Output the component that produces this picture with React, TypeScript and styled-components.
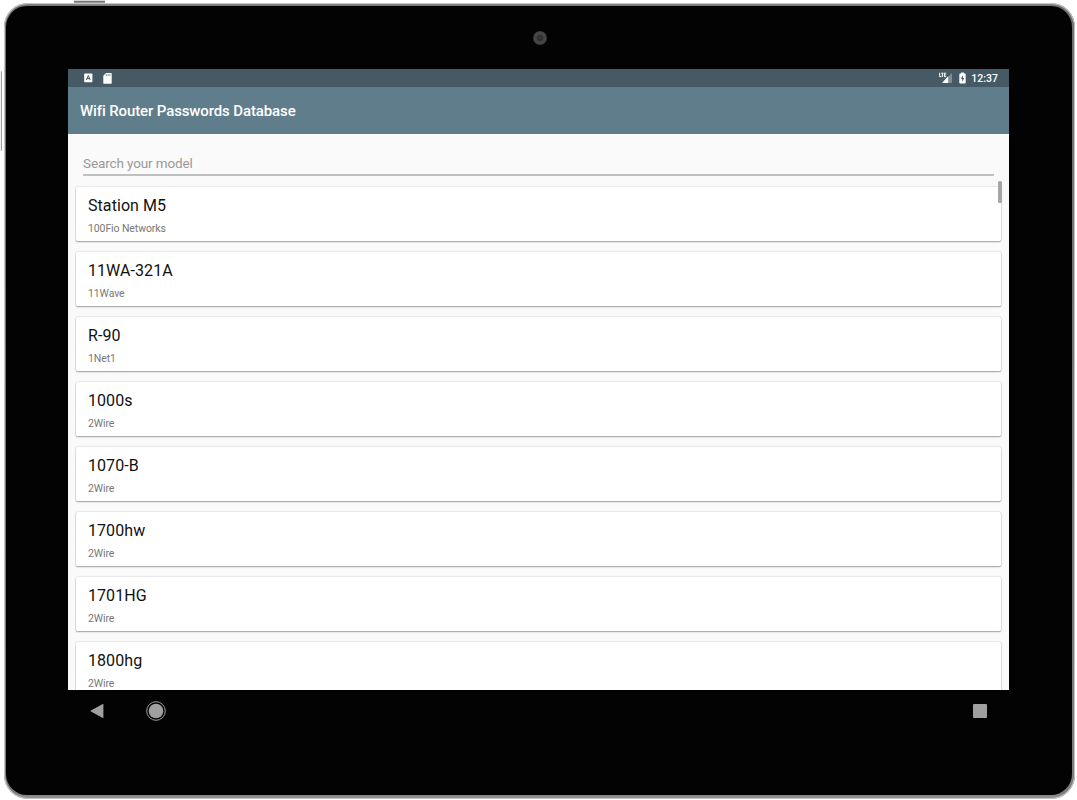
import React from "react";
import styled, { createGlobalStyle } from "styled-components";

const routers = [
  { model: "Station M5", brand: "100Fio Networks" },
  { model: "11WA-321A", brand: "11Wave" },
  { model: "R-90", brand: "1Net1" },
  { model: "1000s", brand: "2Wire" },
  { model: "1070-B", brand: "2Wire" },
  { model: "1700hw", brand: "2Wire" },
  { model: "1701HG", brand: "2Wire" },
  { model: "1800hg", brand: "2Wire" },
];

const App = () => {
  return (
    <Page>
      <GlobalStyle />
      <PowerButton />
      <VolumeButton />
      <Device>
        <Bezel>
          <TopBezel>
            <Camera />
          </TopBezel>
          <Screen>
            <StatusBar>
              <StatusGroup>
                <KeyboardIcon />
                <SdCardIcon />
              </StatusGroup>
              <StatusGroup>
                <SignalIcon />
                <BatteryIcon />
                <Clock>12:37</Clock>
              </StatusGroup>
            </StatusBar>
            <AppBar>
              <Title>Wifi Router Passwords Database</Title>
            </AppBar>
            <Search placeholder="Search your model" />
            <List>
              <ScrollThumb />
              {routers.map((router) => (
                <Card key={router.model}>
                  <Model>{router.model}</Model>
                  <Brand>{router.brand}</Brand>
                </Card>
              ))}
            </List>
          </Screen>
          <NavBar>
            <NavGroup>
              <svg width="14" height="16" viewBox="0 0 14 16">
                <path d="M13.4 1.2v13.6q0 .6-.6.3L.9 8.4q-.6-.4 0-.8L12.8.9q.6-.3.6.3z" fill="#a0a0a0" />
              </svg>
              <svg width="20" height="20" viewBox="0 0 20 20">
                <circle cx="10" cy="10" r="9.3" fill="none" stroke="#a0a0a0" strokeWidth="1" />
                <circle cx="10" cy="10" r="7.3" fill="#a0a0a0" />
              </svg>
            </NavGroup>
            <Recents />
          </NavBar>
        </Bezel>
      </Device>
    </Page>
  );
};

export default App;

const KeyboardIcon = () => (
  <svg width="9" height="10" viewBox="0 0 9 10">
    <rect x="0.2" y="0.5" width="8.2" height="8.8" rx="0.8" fill="#fff" />
    <path d="M2.4 7 4.3 2.5 6.2 7M3 5.6h2.6" fill="none" stroke="#455a64" strokeWidth="1" />
  </svg>
);

const SdCardIcon = () => (
  <svg width="9" height="11" viewBox="0 0 9 11">
    <path d="M3 0h4.8q.9 0 .9.9v9q0 .9-.9.9H1.2q-.9 0-.9-.9V2.8z" fill="#fff" />
    <path d="M3.3 1.2v1.9M5.1 1.2v1.9M6.9 1.2v1.9" stroke="#6b7d86" strokeWidth="0.9" />
  </svg>
);

const SignalIcon = () => (
  <svg width="14" height="12" viewBox="0 0 14 12">
    <path d="M13 1v10H3z" fill="#7f8e95" />
    <path d="M9.2 4.3V11H3z" fill="#fff" />
    <path d="M.7.8v3.9h1.6M2.3 1.2h2.2M3.4 1.2v3.8M7.2 1.2H5.4v3.5h1.8M5.4 2.9h1.5" fill="none" stroke="#fff" strokeWidth="1" />
  </svg>
);

const BatteryIcon = () => (
  <svg width="7" height="12" viewBox="0 0 7 12">
    <path d="M2.2.4h2.6v1h1q.9 0 .9.9v8.2q0 .9-.9.9H1.2q-.9 0-.9-.9V2.3q0-.9.9-.9h1z" fill="#fff" />
    <path d="M4 3.3 1.8 6.8h1.4v2.9L5.3 6H4z" fill="#455a64" />
  </svg>
);

const GlobalStyle = createGlobalStyle`
  * {
    box-sizing: border-box;
  }

  body {
    margin: 0;
    background: #fff;
    font-family: Roboto, "Liberation Sans", sans-serif;
  }
`;

const Page = styled.div`
  position: relative;
  width: 1077px;
  height: 800px;
  padding: 3px 2px 1px 4px;
  overflow: hidden;
`;

const PowerButton = styled.div`
  position: absolute;
  left: 74px;
  top: 0;
  width: 31px;
  height: 3px;
  background: linear-gradient(#d5d5d5 1px, #666 1px, #aaa);
`;

const VolumeButton = styled.div`
  position: absolute;
  left: 0;
  top: 71px;
  width: 2px;
  height: 80px;
  border-radius: 1px;
  background: linear-gradient(to right, #eee 1px, #a2a2a2 1px);
`;

const Device = styled.div`
  height: 796px;
  padding: 3px 3px 4px 2px;
  border-radius: 24px;
  background: linear-gradient(#999, #707070 3px, #7d7d7d 790px, #999);
  box-shadow: inset 0 0 0 1px #c4c4c4;
`;

const Bezel = styled.div`
  height: 100%;
  padding: 0 62px;
  border-radius: 21px;
  background: #030303;
`;

const TopBezel = styled.div`
  display: flex;
  justify-content: center;
  height: 63px;
  padding-top: 25px;
`;

const Camera = styled.div`
  width: 14px;
  height: 14px;
  margin-left: 2px;
  border-radius: 50%;
  background: radial-gradient(circle, #444 0, #2a2a2a 2px, #464646 4px, #454545 6px, #303030 7px);
`;

const Screen = styled.div`
  display: flex;
  flex-direction: column;
  width: 941px;
  height: 621px;
  overflow: hidden;
  background: #fafafa;
`;

const StatusBar = styled.div`
  display: flex;
  flex: none;
  justify-content: space-between;
  align-items: center;
  height: 18px;
  padding: 0 11px 0 15.5px;
  background: #455a64;
`;

const StatusGroup = styled.div`
  display: flex;
  align-items: center;

  svg {
    display: block;
  }

  svg:first-child {
    margin-right: 10px;
  }

  svg + svg {
    margin-right: 5px;
  }

  &:last-child svg:first-child {
    margin-right: 6px;
  }
`;

const Clock = styled.span`
  padding-top: 1px;
  color: #fff;
  font-size: 10.5px;
  font-weight: 500;
  line-height: 17px;
`;

const AppBar = styled.div`
  display: flex;
  flex: none;
  align-items: center;
  height: 47px;
  padding: 1px 12px 0;
  background: #607d8b;
`;

const Title = styled.h1`
  margin: 0;
  color: #fff;
  font-size: 15px;
  font-weight: 500;
  letter-spacing: -0.12px;
`;

const Search = styled.input`
  flex: none;
  width: 911px;
  height: 27px;
  margin: 15px 0 0 15px;
  padding: 3px 0 0;
  border: 0;
  border-bottom: 2px solid #c0c0c0;
  outline: none;
  background: none;
  font-family: inherit;
  font-size: 13.5px;
  letter-spacing: -0.12px;

  &::placeholder {
    color: #999;
  }
`;

const List = styled.div`
  position: relative;
  flex: 1;
  min-height: 0;
  padding: 11px 8px 0;
`;

const ScrollThumb = styled.div`
  position: absolute;
  top: 5px;
  right: 7px;
  width: 4px;
  height: 22px;
  border-radius: 1.5px;
  background: #a5a5a5;
`;

const Card = styled.div`
  height: 54px;
  margin-bottom: 11.06px;
  padding: 9px 12px 0;
  border-radius: 1.5px;
  background: #fff;
  box-shadow: 0 1px 1.5px rgba(0, 0, 0, 0.32), 0 0 1.5px rgba(0, 0, 0, 0.3);
`;

const Model = styled.div`
  color: #111;
  font-size: 16px;
  line-height: 20px;
  letter-spacing: 0.07px;
`;

const Brand = styled.div`
  margin-top: 6px;
  color: #777;
  font-size: 10.5px;
  line-height: 13px;
  letter-spacing: -0.1px;
`;

const NavBar = styled.div`
  display: flex;
  justify-content: space-between;
  align-items: center;
  height: 41px;
  padding: 0 23px 0 22px;
`;

const NavGroup = styled.div`
  display: flex;
  align-items: center;
  gap: 42px;
`;

const Recents = styled.div`
  width: 14px;
  height: 14px;
  border-radius: 1px;
  background: #a0a0a0;
`;
